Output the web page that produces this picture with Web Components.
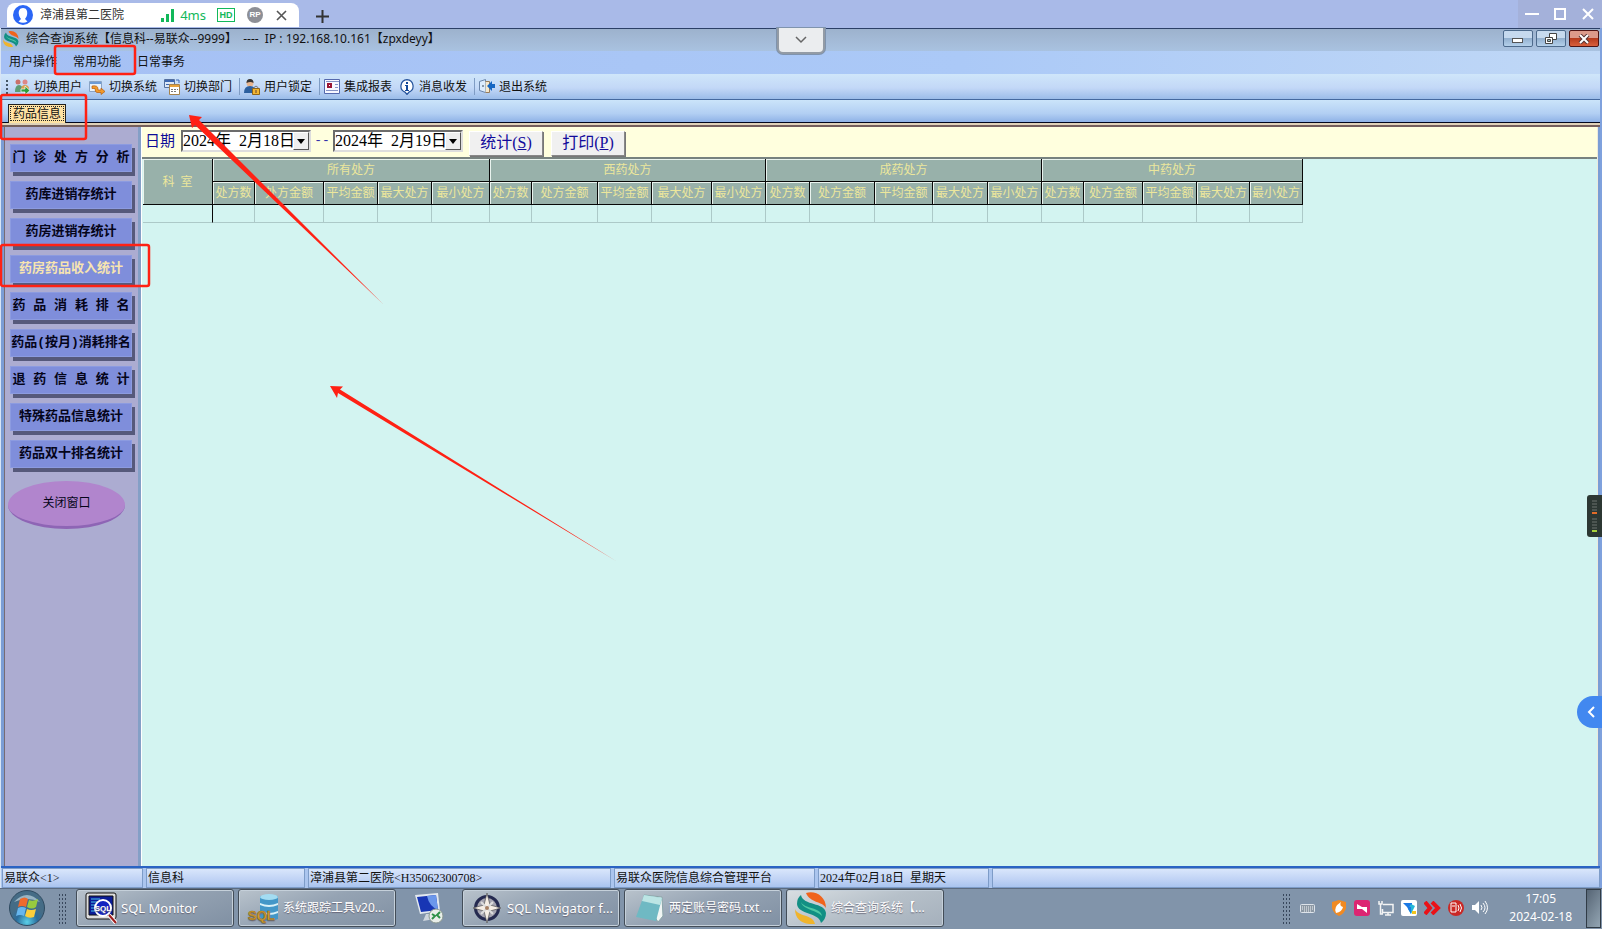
<!DOCTYPE html>
<html lang="zh-CN">
<head>
<meta charset="utf-8">
<title>综合查询系统</title>
<style>
body{margin:0;font:12px/16px "Noto Sans","Noto Sans CJK SC",sans-serif;color:#111;background:#a9bae8}
</style>
</head>
<body>
<his-desktop></his-desktop>
<script>
const base = `*{box-sizing:border-box}
button,input{font:inherit;color:inherit;margin:0;padding:0;border:0;background:none;border-radius:0}
svg{display:block;flex:none}`;
function define(name, css, html) {
  const template = document.createElement('template');
  customElements.define(name, class extends HTMLElement {
    constructor() {
      super();
      const markup = typeof html === 'function' ? html(this) : html;
      template.innerHTML = `<style>${base}${css}</style>${markup}`;
      this.attachShadow({mode: 'open'}).append(template.content.cloneNode(true));
    }
  });
}
const swirl = size => `<svg width="${size}" height="${size}" viewBox="0 0 32 32"><path d="M11 1C20-2 31 4 31 16C27 9 15 11 11 1Z" fill="#f0641c"/><path d="M6 3C8 14 30 10 31 21Q31 27 26 31C24 20 3 23 2 12Q2 6 6 3Z" fill="#128f84"/><path d="M6 10C9 17 26 15 27 24C22 18 8 18 6 10Z" fill="#4fc9a4"/><path d="M0 17C3 25 18 22 20 32C8 33 0 28 0 17Z" fill="#f0b42c"/></svg>`;

define('remote-tabs', `
:host{display:flex;height:28px;background:#a9bae8;padding:0 0 0 7px;justify-content:space-between}
.tab{display:flex;align-items:center;width:292px;height:24px;margin-top:3px;padding:0 12px 0 6px;background:#fff;border-radius:8px 8px 0 0}
.name{margin-left:7px;flex:1;color:#333}
.ping{color:#12b85a;font-size:13px;margin:0 11px 0 5px}
.hd{width:18px;height:14px;border:1px solid #12b85a;color:#12b85a;font:bold 9px/12px "Liberation Sans",sans-serif;text-align:center}
.rp{width:16px;height:16px;border-radius:8px;background:#8d8f96;color:#fff;font:bold 8px/16px "Liberation Sans",sans-serif;text-align:center;margin:0 13px 0 12px}
.left,.win{display:flex}.new{width:46px;display:grid;place-items:center;padding-top:4px}
.win button{width:28px;display:grid;place-items:center}
.win{background:#a4b1da}`, `
<div class="left"><div class="tab"><svg width="20" height="20" viewBox="0 0 20 20"><circle cx="10" cy="10" r="10" fill="#2b66f6"/><path d="M10 3C6.500 3 5.500 6 5.800 9C6.200 12 7.500 13 8 14L5.500 16.500Q10 19 14.500 16.500L12 14C12.500 13 13.800 12 14.200 9C14.500 6 13.500 3 10 3Z" fill="#fff"/></svg>
<span class="name">漳浦县第二医院</span>
<svg width="14" height="13"><path d="M0 9h3v4H0zM5 5h3v8H5zM10 0h3v13h-3z" fill="#12b85a"/></svg><span class="ping">4ms</span><span class="hd">HD</span><span class="rp">RP</span>
<button aria-label="关闭标签"><svg width="11" height="11"><path d="M1 1l9 9M10 1l-9 9" stroke="#555" stroke-width="1.600"/></svg></button></div>
<button class="new" aria-label="新标签"><svg width="13" height="13"><path d="M6.500 0v13M0 6.500h13" stroke="#333" stroke-width="2"/></svg></button></div>
<div class="win"><button aria-label="最小化"><svg width="14" height="12"><path d="M0 6h14" stroke="#fff" stroke-width="2"/></svg></button><button aria-label="最大化"><svg width="12" height="12"><path d="M1 1h10v10H1z" fill="none" stroke="#fff" stroke-width="2"/></svg></button><button aria-label="关闭"><svg width="12" height="12"><path d="M1 1l10 10M11 1L1 11" stroke="#fff" stroke-width="2"/></svg></button></div>`);

define('app-title', `
:host{display:flex;height:23px;align-items:center;padding:0 1px 2px 2px;background:linear-gradient(#9db2cd,#a9c2e0);border-top:1px solid #2b3f66}
.t{flex:1;margin-left:7px;white-space:pre}
.b{display:flex;gap:3px;align-self:flex-start;padding-top:1px}
button{width:30px;height:17px;border:1px solid #4d6a8c;border-radius:2px;background:linear-gradient(#c6d9ee 45%,#93b0cf 50%,#b4d0ea);display:grid;place-items:center}
.x{border-color:#4e1414;background:linear-gradient(#dc9a8a 45%,#b63c1e 50%,#d9603c)}`, `
${swirl(16)}<span class="t">综合查询系统【信息科--易联众--9999】  ----  IP : 192.168.10.161【zpxdeyy】</span>
<div class="b"><button aria-label="最小化"><svg width="12" height="10"><rect x=".5" y="4.500" width="10" height="4" fill="#fff" stroke="#555"/></svg></button>
<button aria-label="还原"><svg width="12" height="12"><path d="M4.500.5h7v6h-7z" fill="#fff" stroke="#444"/><path d="M.5 4.500h7v6h-7z" fill="#fff" stroke="#444"/><path d="M2.500 6.500h3v2h-3z" fill="#9bb" stroke="#444"/></svg></button>
<button class="x" aria-label="关闭"><svg width="12" height="10"><path d="M2 1l8 8M10 1L2 9" stroke="#533" stroke-width="4"/><path d="M2 1l8 8M10 1L2 9" stroke="#fff" stroke-width="2"/></svg></button></div>`);

define('app-menu', `
:host{display:flex;height:23px;align-items:center;padding:0 8px 2px;gap:16px;background:linear-gradient(90deg,#a5c0f4,#abc9f7 60%,#c0d8f6)}`, `
<button>用户操作</button><button>常用功能</button><button>日常事务</button>`);

define('tool-strip', `
:host{display:flex;height:26px;align-items:center;padding:0 5px;background:linear-gradient(#cfe6fa,#c3d8f7 55%,#9bbce9);border-bottom:1px solid #44699f}
.grip{width:2px;height:14px;margin-right:6px;background:repeating-linear-gradient(#456 0 2px,transparent 2px 4px)}
button{display:flex;align-items:center;gap:4px;margin-right:7px;line-height:16px}
i{width:1px;height:17px;background:#7f9cc4;margin-right:4px}`, `
<span class="grip"></span>
<button><svg width="16" height="16"><circle cx="4" cy="3" r="2.500" fill="#c9706a"/><circle cx="11" cy="3" r="2.500" fill="#d88"/><path d="M1 13q0-7 4-7t4 7z" fill="#5c9c74"/><path d="M7 11q0-5 4-5t4 4z" fill="#dba04e"/><path d="M7 10h4V7l5 4.500-5 4.500v-3H7z" fill="#2e9e3c" stroke="#fff" stroke-width=".7"/></svg>切换用户</button>
<button><svg width="16" height="16"><path d="M.5 2.500h12v10H.5z" fill="#e9f2fb" stroke="#89a3c5"/><path d="M1 3h11v2H1z" fill="#6c9bd6"/><path d="M3 7q6-1 6 3v1h3V9l4 3.500-4 3v-2H8q-2 0-2-4H3z" fill="#f29a2c" stroke="#b55d10" stroke-width=".7"/></svg>切换系统</button>
<button><svg width="16" height="16"><path d="M.5.500h10v8H.5z" fill="#dce8f8" stroke="#54709f"/><path d="M1 1h9v2H1zM2 5h5v1H2z" fill="#3d67b1"/><path d="M12 1h3v3" fill="none" stroke="#3d67b1"/><path d="M5.500 5.500h10v10h-10z" fill="#fff" stroke="#a5824c"/><path d="M6 6h9v2H6z" fill="#e8a33c"/><path d="M7 10h2v1H7zm3 0h2v1h-2zm3 0h1v1h-1zm-6 2h2v1H7zm3 0h2v1h-2z" fill="#777"/></svg>切换部门</button>
<i></i>
<button><svg width="16" height="16"><circle cx="6" cy="4" r="3.500" fill="#e8b58e"/><path d="M2.500 4q0-4 3.500-4t3.500 4q-3-2-7 0z" fill="#333"/><path d="M0 14q0-7 6-7t6 7z" fill="#2c5f9e"/><path d="M10 10V8.500q2-3 4 0V10" fill="none" stroke="#777"/><path d="M8.500 9.500h7v6h-7z" fill="#f2b632" stroke="#8f6518"/><path d="M12 11v3" stroke="#643"/></svg>用户锁定</button>
<i></i>
<button><svg width="16" height="16"><path d="M.5.500h15v14H.5z" fill="#f8f8ff" stroke="#5468ad"/><path d="M2 2h13v1H2zM11 5h3v1h-3zM11 8h3v1h-3zM2 11h12v1H2z" fill="#8592c5"/><path d="M4 5h3v3H4z" fill="#fff" stroke="#9a1535" stroke-width="2"/></svg>集成报表</button>
<button><svg width="16" height="16"><path d="M8 .600a6.500 6.500 0 0 1 2 12.500L8 15.500 6 13.100A6.500 6.500 0 0 1 8 .600z" fill="#fff" stroke="#26549c" stroke-width="1.200"/><path d="M7 3h2v2H7zM6 6h3v5h1v1H6v-1h1V7H6z" fill="#164a9a"/></svg>消息收发</button>
<i></i>
<button><svg width="16" height="16"><path d="M.5 2.500L6.500.500v13l-6-2z" fill="#dcecff" stroke="#6b86ab"/><path d="M6.500 2.500h4v11h-4" fill="#f5e8cf" stroke="#9a7e5c"/><path d="M8 7l5-5v3h3v4h-3v3z" fill="#1767c3"/><path d="M4 6v2" stroke="#345"/></svg>退出系统</button>`);

define('sheet-tabs', `
:host{display:flex;height:27px;align-items:flex-end;padding:0 7px;background:linear-gradient(#cbe4fa,#b2cff3 50%,#8fb2e6 22px,#00061c 22px 23px,#e0d2b8 23px 25px,#755f5c 25px)}
button{height:19px;margin-bottom:4px;padding:0 4px;border:1px solid #222;border-bottom:0;background:#ffe2a2;outline:1px dotted #222;outline-offset:-3px;line-height:16px}`, `
<button>药品信息</button>`);

define('nav-button', `
:host{display:block}
button{display:block;width:100%;height:28px;background:#7f8edb;border:1px solid #8c9be0;box-shadow:3px 4px 0 #56597b;font:bold 13px/16px "Liberation Mono","Noto Sans CJK SC",monospace;color:#05051a;white-space:nowrap}
:host([active]) button{color:#f7e4b0}
:host([round]){margin:4px 0 0 -2px}
:host([round]) button{width:117px;height:48px;border:0;border-bottom:3px solid #8e65b5;border-radius:50%;background:#b185cd;box-shadow:none;font-size:12px;font-weight:normal}`, `<button><slot></slot></button>`);

define('side-nav', `
:host{display:flex;flex-direction:column;gap:9px;width:137px;flex:none;padding:17px 6px 0 5px;border-left:1px solid #776b73;border-right:3px solid #849fc6;background:#acacd1}`, `
<nav-button>门 诊 处 方 分 析</nav-button><nav-button>药库进销存统计</nav-button><nav-button>药房进销存统计</nav-button><nav-button active>药房药品收入统计</nav-button><nav-button>药 品 消 耗 排 名</nav-button><nav-button>药品(按月)消耗排名</nav-button><nav-button>退 药 信 息 统 计</nav-button><nav-button>特殊药品信息统计</nav-button><nav-button>药品双十排名统计</nav-button><nav-button round>关闭窗口</nav-button>`);

define('date-box', `
:host{display:flex;width:130px;height:22px;background:#fff;border:2px solid;border-color:#6c6c6c #ddd #ddd #6c6c6c}
input{flex:1;min-width:0;font:16px/18px "Liberation Serif","Noto Sans CJK SC",serif;color:#000;white-space:pre}
button{width:16px;flex:none;border:1px solid;border-color:#fff #555 #555 #fff;background:#eee;display:grid;place-items:center}`, host => `
<input aria-label="${host.getAttribute('label')}" value="${host.getAttribute('value')}"><button aria-label="选择日期"><svg width="8" height="5"><path d="M0 0h8L4 5z"/></svg></button>`);

define('filter-bar', `
:host{display:flex;height:30px;align-items:center;padding:0 3px 2px;background:#ffffde;color:#0d0d97;font:15px/20px "Liberation Serif","Noto Sans CJK SC",serif}
.l{margin-right:6px}.d{width:22px;text-align:center;color:#33a;font:13px/20px "Liberation Mono",monospace}
.a{width:74px;height:25px;margin:4px 0 0 8px;background:#f0f0f0;border:1px solid;border-color:#fff #888 #888 #fff;box-shadow:1px 1px 0 #777;color:#120a9b;font-size:16px;line-height:20px}
.d+date-box+.a{margin-left:6px}`, `
<span class="l">日期</span><date-box label="开始日期" value="2024年&nbsp; 2月18日"></date-box><span class="d">--</span><date-box label="结束日期" value="2024年&nbsp; 2月19日"></date-box>
<button class="a">统计(<u>S</u>)</button><button class="a">打印(<u>P</u>)</button>`);

const groups = [['所有处方',[42,69,54,54,58]],['西药处方',[42,66,54,60,54]],['成药处方',[44,65,58,55,54]],['中药处方',[42,59,54,53,53]]];
const fields = ['处方数','处方金额','平均金额','最大处方','最小处方'];
define('stat-grid', `
:host{display:block;flex:1;border-top:2px solid #77827f;background:#d3f4f1}
table{border-collapse:separate;border-spacing:0;table-layout:fixed;width:1160px;margin-left:1px}
th,td{padding:0;text-align:center;white-space:nowrap;overflow:hidden}
th{height:23px;line-height:18px;font-weight:400;color:#ece79c;background:#98b1aa;border:1px solid #080808;border-width:0 1px 1px 0;box-shadow:inset 1px 1px 0 #e9f3ee}
td{height:18px;border:1px solid #acc9c8;border-width:0 1px 1px 0}
td:first-child{border-right-color:#080808}`, `
<table><colgroup><col style="width:70px">${groups.map(g=>g[1].map(w=>`<col style="width:${w}px">`).join('')).join('')}</colgroup>
<thead><tr><th rowspan="2">科 &nbsp;室</th>${groups.map(g=>`<th colspan="5">${g[0]}</th>`).join('')}</tr><tr>${groups.map(()=>fields.map(f=>`<th>${f}</th>`).join('')).join('')}</tr></thead>
<tbody><tr>${'<td></td>'.repeat(21)}</tr></tbody></table>`);

define('status-bar', `
:host{display:flex;gap:3px;height:22px;padding:0 0 0 1px;border-top:2px solid #2a63c4;background:#abc5ee}
span{padding:1px;border:1px solid #7d9cc8;background:linear-gradient(#d9e6fb,#bfd2f5 60%,#a9c4ef);line-height:17px;white-space:pre;font-family:"Liberation Serif","Noto Sans CJK SC",serif}
.a{width:141px}.b{width:159px}.c{width:303px}.d{width:201px}.e{width:171px}.f{flex:1}`, `
<span class="a">易联众&lt;1&gt;</span><span class="b">信息科</span><span class="c">漳浦县第二医院&lt;H35062300708&gt;</span><span class="d">易联众医院信息综合管理平台</span><span class="e">2024年02月18日  星期天</span><span class="f"></span>`);

define('task-button', `
:host{display:block;width:158px;flex:none}
button{width:100%;height:38px;display:flex;align-items:center;gap:4px;padding:0 8px;border:1px solid #434d58;border-radius:3px;box-shadow:inset 0 0 0 1px #c5d0da;background:linear-gradient(160deg,#b9c3cc,#95a3b3 45%,#8090a3);color:#fff;text-shadow:0 1px 1px #667;font:13px/18px "Noto Sans","Noto Sans CJK SC",sans-serif;white-space:nowrap}
:host([small]) button{font-size:12px}
:host([current]) button{background:linear-gradient(160deg,#d8dee2,#b6c0c9 50%,#a5b0bc)}`, `<button><slot name="icon"></slot><slot></slot></button>`);

define('task-bar', `
:host{display:flex;height:41px;align-items:center;gap:4px;padding:0 0 2px 9px;background:#8194aa;border-top:1px solid #5b6b80;color:#fff}
.grip{width:9px;height:31px;background:radial-gradient(circle,#38475c 0 1px,transparent 1px) 0 0/3px 4px}
.start{margin-right:9px}.g1{margin-right:5px}
.rdp{width:58px;display:grid;place-items:center}
.sp{flex:1}
.tray{display:flex;align-items:center;gap:7px;margin:0 17px 0 5px}
.tray svg:first-child{margin-right:8px}
.clock{text-align:center;font-size:12px;line-height:18px;margin-right:10px}
.peek{width:15px;height:39px;margin-right:1px;border:1px solid #303b46;background:linear-gradient(120deg,#566575,#93a5b3)}`, `
<button class="start" aria-label="开始"><svg width="36" height="36" viewBox="0 0 36 36"><defs><radialGradient id="o" cy=".9"><stop stop-color="#5bd0e8"/><stop offset=".6" stop-color="#2a6d9d"/><stop offset="1" stop-color="#456c86"/></radialGradient></defs><circle cx="18" cy="18" r="17.500" fill="url(#o)" stroke="#2f4a60"/><path d="M5 12Q18-2 31 12Q18 6 5 12Z" fill="#bcd3dd" opacity=".7"/><path d="M11 9q5-3 8 0l-2 8q-4-2-8 0z" fill="#ee6a2c"/><path d="M20 10q4 2 9-1l-2 8q-4 3-9 0z" fill="#97cb3f"/><path d="M9 18q4-2 8 0l-2 8q-4-2-8 0z" fill="#66b6ee"/><path d="M18 19q4 2 9 0l-2 8q-5 2-9-1z" fill="#fbce3c"/></svg></button>
<span class="grip g1"></span>
<task-button><svg slot="icon" width="32" height="32"><rect x="1" y="1" width="30" height="26" rx="2" fill="#ddd" stroke="#111"/><path d="M4 4h24v19H4z" fill="#0b1c96" stroke="#111"/><path d="M6 7h9M6 10h6M6 13h5M6 16h4M6 19h5" stroke="#4ac5ef"/><circle cx="18" cy="16" r="8" fill="#1224c0" stroke="#fff" stroke-width="2"/><text x="18" y="19" fill="#fff" font-size="8" font-family="Liberation Sans" font-weight="bold" text-anchor="middle">SQL</text><path d="M24 23l7 8" stroke="#fff" stroke-width="4"/><path d="M24 23l7 8" stroke="#9e1c1c" stroke-width="2"/></svg>SQL Monitor</task-button>
<task-button small><svg slot="icon" width="32" height="32"><path d="M13 4v23q9 4 18 0V4z" fill="#4397c8"/><ellipse cx="22" cy="5" rx="9" ry="3" fill="#a3dcf2"/><path d="M13 11q9 4 18 0v2q-9 4-18 0zM13 19q9 4 18 0v2q-9 4-18 0z" fill="#d9f1f8"/><text x="1" y="28" fill="#f6b51e" stroke="#9d6c0a" stroke-width=".5" font-family="Liberation Sans" font-size="13" font-weight="bold">SQL</text></svg>系统跟踪工具v20...</task-button>
<button class="rdp" aria-label="远程桌面"><svg width="30" height="32"><path d="M1 3l23-2 2 18-20 3z" fill="#e2e8ef"/><path d="M3 5l19-2 2 15-17 2z" fill="#1836b4"/><path d="M13 4l9-1 2 15q-9-4-11-14z" fill="#6b97eb"/><path d="M12 22h7l2 5-12 2z" fill="#cfd6de"/><circle cx="22" cy="24" r="7" fill="#e9eee9" stroke="#8a9791"/><path d="M18 22l3 2-3 3M26 20l-3 3 3 3" fill="none" stroke="#2f9147" stroke-width="2"/></svg></button>
<task-button><svg slot="icon" width="32" height="32" viewBox="0 0 30 32"><circle cx="15" cy="16" r="11.500" fill="#a5a4b0" stroke="#252a50" stroke-width="3"/><path d="M15 1l3 12 11 3-11 3-3 12-3-12-11-3 11-3z" fill="#f6eee5" stroke="#555" stroke-width=".7"/><path d="M9 10l12 12M21 10L9 22" stroke="#ddd" stroke-width="2"/><circle cx="15" cy="16" r="2" fill="#a78064"/></svg>SQL Navigator f...</task-button>
<task-button small><svg slot="icon" width="32" height="32"><path d="M11 3l18 2 1 19-5 6-3-5z" fill="#f0f6f4" stroke="#8aa5a8"/><path d="M11 3l18 3-6 23-20-4z" fill="#6fb9c3"/><path d="M11 3l18 3-2 7-18-4z" fill="#bce5e4"/></svg>两定账号密码.txt ...</task-button>
<task-button small current><span slot="icon">${swirl(32)}</span>综合查询系统【...</task-button>
<span class="sp"></span><span class="grip"></span>
<div class="tray"><svg width="16" height="12"><rect x=".5" y="2.500" width="14" height="8" rx="1" fill="#8c98a4" stroke="#dde3ea"/><path d="M2 5h11M2 7h11M4 9h7" stroke="#f3f5f7" stroke-dasharray="1 1"/></svg>
<svg width="16" height="16"><path d="M1 2l7-2 7 2v6q-1 5-7 8Q2 13 1 8z" fill="#f18a22"/><path d="M5 13Q2 7 10 2q-2 4 2 5-1 5-7 6z" fill="#fff"/></svg>
<svg width="17" height="16"><rect width="16" height="16" rx="3" fill="#dc2472"/><path d="M3 4l5 3 5 0v6L8 9l-5 0z" fill="#fff"/></svg>
<svg width="16" height="16"><path d="M5 4.500h10v8H4.500V9M7 15h6M10 13v2M1 1v3h3V1M2.500 4v10H5" fill="none" stroke="#f4f4f4" stroke-width="1.500"/></svg>
<svg width="16" height="16"><rect width="16" height="16" rx="2" fill="#fff"/><path d="M2 3h9v4H6z" fill="#1b78e4"/><path d="M10 4l4 2-4 8-3-5z" fill="#24b7d7"/><path d="M6 7h4v7z" fill="#1b78e4"/><path d="M11 11h4v3h-4z" fill="#f2c51f"/></svg>
<svg width="17" height="14"><path d="M1 1l5 6-5 6M8 1l6 6-6 6" fill="none" stroke="#ea1116" stroke-width="4"/></svg>
<svg width="16" height="16"><circle cx="8" cy="8" r="8" fill="#ca2825"/><path d="M3 3h5v9H3zM4 6h3M10 5q2 3 0 6M12 4q3 4 0 8" fill="none" stroke="#fff"/></svg>
<svg width="17" height="16"><path d="M1 5h3l4-4v13l-4-4H1z" fill="#fff"/><path d="M10 5q2 3 0 5M12 3q4 5 0 9M14 1q5 7 0 13" fill="none" stroke="#fff"/></svg></div>
<div class="clock">17:05<br>2024-02-18</div><button class="peek" aria-label="显示桌面"></button>`);

define('floating-tools', `
:host{display:contents}
.pull{position:absolute;top:28px;left:50%;margin-left:-24px;width:48px;height:26px;background:#ebedef;border:2px solid #939ba5;border-top:0;border-radius:0 0 6px 6px;display:grid;place-items:center;box-shadow:0 0 0 1px #7f93ad}
.meter{position:absolute;right:0;top:495px;width:15px;height:42px;border-radius:3px 0 0 3px;background:#2c3733;display:grid;place-items:center}
.drawer{position:absolute;right:0;top:696px;width:25px;height:32px;border-radius:16px 0 0 16px;background:#4288f0;display:grid;place-items:center;padding-left:4px}`, `
<button class="pull" aria-label="展开工具栏"><svg width="14" height="8"><path d="M2 1l5 5 5-5" fill="none" stroke="#666" stroke-width="1.500"/></svg></button>
<div class="meter"><svg width="5" height="32"><path d="M0 1h5M0 4h5M0 7h5M0 10h5M0 19h5M0 22h5M0 25h5M0 28h5" stroke="#6c7470"/><path d="M0 13h5" stroke="#e36c28" stroke-width="2"/><path d="M0 31h5" stroke="#a8d03c" stroke-width="2"/></svg></div>
<button class="drawer" aria-label="展开侧栏"><svg width="10" height="12"><path d="M7 1L2 6l5 5" fill="none" stroke="#fff" stroke-width="2"/></svg></button>`);

define('mark-layer', `
:host{position:absolute;inset:0;pointer-events:none;overflow:hidden}`, `
<svg width="640" height="600"><g fill="none" stroke="#ff2114" stroke-width="2.500"><rect x="55" y="46" width="80" height="28" rx="2"/><rect x="1" y="95" width="85" height="44" rx="2"/><rect x="1" y="245" width="148" height="41" rx="2"/></g><g fill="#ff2114"><path d="M189 115l13 2-3 3L383 304 195 125l-3 3z"/><path d="M330 386l13 .5-3 3L616 561 338 393l-1 5z"/></g></svg>`);

define('his-desktop', `
:host{display:flex;flex-direction:column;min-height:100vh;position:relative}
.app{flex:1;display:flex;flex-direction:column;border-left:1px solid #d7e4f5;border-right:2px solid #7fa1dd}
.work{flex:1;display:flex;padding:0 2px 0 3px;background:#7a9dd5}
.main{flex:1;min-width:0;display:flex;flex-direction:column;border-left:1px solid #fff;border-right:1px solid #ece9dc}`, `
<remote-tabs></remote-tabs>
<div class="app"><app-title></app-title><app-menu></app-menu><tool-strip></tool-strip><sheet-tabs></sheet-tabs>
<div class="work"><side-nav></side-nav><div class="main"><filter-bar></filter-bar><stat-grid></stat-grid></div></div>
<status-bar></status-bar></div><task-bar></task-bar><floating-tools></floating-tools><mark-layer></mark-layer>`);
</script>
</body>
</html>
